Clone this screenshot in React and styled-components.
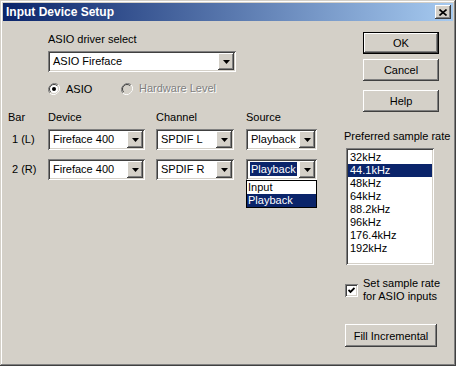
import styled, { createGlobalStyle } from 'styled-components'

const GlobalStyle = createGlobalStyle`
  html, body {
    margin: 0;
    padding: 0;
    background: #d4d0c8;
  }
  body {
    font-family: 'Liberation Sans', Arial, sans-serif;
    font-size: 11px;
    color: #000;
  }
  * {
    box-sizing: border-box;
  }
`

const raised = `
  box-shadow: inset -1px -1px #404040, inset 1px 1px #ffffff,
    inset -2px -2px #808080, inset 2px 2px #d4d0c8;
`
const sunken = `
  box-shadow: inset 1px 1px #808080, inset -1px -1px #ffffff,
    inset 2px 2px #404040, inset -2px -2px #d4d0c8;
`

const Window = styled.div`
  width: 456px;
  height: 366px;
  padding: 3px;
  background: #d4d0c8;
  box-shadow: inset -1px -1px #404040, inset 1px 1px #d4d0c8,
    inset -2px -2px #808080, inset 2px 2px #ffffff;
  display: flex;
  flex-direction: column;
`

const TitleBar = styled.div`
  height: 18px;
  display: flex;
  align-items: center;
  justify-content: space-between;
  padding: 0 2px 0 3px;
  background: linear-gradient(to right, #0a246a, #a6caf0);
`

const Title = styled.span`
  color: #fff;
  font-weight: bold;
  font-size: 12px;
`

const CloseButton = styled.div`
  width: 16px;
  height: 14px;
  background: #d4d0c8;
  ${raised}
  display: flex;
  align-items: center;
  justify-content: center;
  padding-right: 1px;
`

const Body = styled.div`
  flex: 1;
  display: flex;
`

const LeftPane = styled.div`
  width: 340px;
  display: flex;
  flex-direction: column;
`

const DriverBlock = styled.div`
  margin: 12px 0 0 45px;
  display: flex;
  flex-direction: column;
`

const Label = styled.div`
  line-height: 13px;
  white-space: nowrap;
  color: ${({ disabled }) => (disabled ? '#808080' : '#000')};
  text-shadow: ${({ disabled }) => (disabled ? '1px 1px #fff' : 'none')};
  padding-left: ${({ indent }) => indent || 0}px;
`

const ComboBox = styled.div`
  position: relative;
  width: ${({ width }) => width}px;
  height: 21px;
  margin-top: ${({ top }) => top || 0}px;
  background: #fff;
  ${sunken}
  padding: 2px;
  display: flex;
`

const ComboText = styled.div`
  flex: 1;
  line-height: 17px;
  padding-left: 3px;
  white-space: nowrap;
  overflow: hidden;
`

const Selected = styled.span`
  background: #0a246a;
  color: #fff;
  padding: 1px 1px;
  margin-left: -1px;
`

const ArrowButton = styled.div`
  width: 16px;
  height: 17px;
  background: #d4d0c8;
  ${raised}
  display: flex;
  align-items: center;
  justify-content: center;
`

const RadioRow = styled.div`
  margin-top: 10px;
  height: 13px;
  display: flex;
  align-items: center;
`

const RadioItem = styled.div`
  display: flex;
  align-items: center;
  gap: 6px;
  width: ${({ width }) => width || 'auto'};
`

const Grid = styled.div`
  margin-top: 16px;
  display: grid;
  grid-template-columns: 45px 108px 90px 72px;
  grid-template-rows: 18px 30px 21px;
  align-items: start;
`

const RowLabel = styled.div`
  line-height: 21px;
  padding-left: 9px;
`

const Cell = styled.div`
  position: relative;
`

const DropList = styled.div`
  position: absolute;
  top: 21px;
  left: 0;
  width: 71px;
  background: #fff;
  border: 1px solid #000;
  z-index: 2;
`

const DropItem = styled.div`
  line-height: 13px;
  padding-left: 1px;
  background: ${({ active }) => (active ? '#0a246a' : 'transparent')};
  color: ${({ active }) => (active ? '#fff' : '#000')};
`

const RightPane = styled.div`
  flex: 1;
  display: flex;
  flex-direction: column;
`

const ButtonStack = styled.div`
  margin: 11px 0 0 20px;
  display: flex;
  flex-direction: column;
`

const Button = styled.div`
  width: ${({ width }) => width || 76}px;
  height: ${({ height }) => height || 22}px;
  margin-top: ${({ top }) => top || 0}px;
  margin-left: ${({ left }) => left || 0}px;
  background: #d4d0c8;
  display: flex;
  align-items: center;
  justify-content: center;
  ${raised}
  ${({ isDefault }) =>
    isDefault &&
    `
    border: 1px solid #000;
    box-shadow: inset -1px -1px #404040, inset 1px 1px #ffffff,
      inset -2px -2px #808080, inset 2px 2px #d4d0c8;
  `}
`

const RateLabel = styled.div`
  margin: 18px 0 0 1px;
  line-height: 13px;
  white-space: nowrap;
`

const ListBox = styled.div`
  margin: 5px 0 0 3px;
  width: 88px;
  height: 117px;
  background: #fff;
  ${sunken}
  padding: 3px 2px 2px;
`

const ListItem = styled.div`
  line-height: 13px;
  padding-left: 2px;
  background: ${({ active }) => (active ? '#0a246a' : 'transparent')};
  color: ${({ active }) => (active ? '#fff' : '#000')};
`

const CheckRow = styled.div`
  margin: 12px 0 0 2px;
  display: flex;
  align-items: center;
  gap: 5px;
`

const CheckBox = styled.div`
  width: 13px;
  height: 13px;
  background: #fff;
  ${sunken}
  display: flex;
  align-items: center;
  justify-content: center;
`

const CheckText = styled.div`
  line-height: 13px;
`

function Arrow() {
  return (
    <svg width="7" height="4" viewBox="0 0 7 4">
      <polygon points="0,0 7,0 3.5,4" fill="#000" />
    </svg>
  )
}

function Combo({ width, value, top, selected, children }) {
  return (
    <ComboBox width={width} top={top}>
      <ComboText>{selected ? <Selected>{value}</Selected> : value}</ComboText>
      <ArrowButton>
        <Arrow />
      </ArrowButton>
      {children}
    </ComboBox>
  )
}

function Radio({ checked, disabled }) {
  return (
    <svg width="12" height="12" viewBox="0 0 12 12">
      <path d="M10.2 1.8 A6 6 0 0 0 1.8 10.2" fill="none" stroke="#808080" strokeWidth="1" />
      <path d="M1.8 10.2 A6 6 0 0 0 10.2 1.8" fill="none" stroke="#ffffff" strokeWidth="1" />
      <circle cx="6" cy="6" r="4.5" fill={disabled ? '#d4d0c8' : '#fff'} />
      <path d="M9.2 2.8 A4.5 4.5 0 0 0 2.8 9.2" fill="none" stroke="#404040" strokeWidth="1" />
      <path d="M2.8 9.2 A4.5 4.5 0 0 0 9.2 2.8" fill="none" stroke="#d4d0c8" strokeWidth="1" />
      {checked && <circle cx="6" cy="6" r="2" fill="#000" />}
    </svg>
  )
}

const rates = ['32kHz', '44.1kHz', '48kHz', '64kHz', '88.2kHz', '96kHz', '176.4kHz', '192kHz']

export default function App() {
  return (
    <>
      <GlobalStyle />
      <Window>
        <TitleBar>
          <Title>Input Device Setup</Title>
          <CloseButton>
            <svg width="8" height="7" viewBox="0 0 8 7">
              <path d="M0.5 0.5 L7.5 6.5 M7.5 0.5 L0.5 6.5" stroke="#000" strokeWidth="1.6" />
            </svg>
          </CloseButton>
        </TitleBar>
        <Body>
          <LeftPane>
            <DriverBlock>
              <Label>ASIO driver select</Label>
              <Combo width={188} top={5} value="ASIO Fireface" />
              <RadioRow>
                <RadioItem width="73px">
                  <Radio checked />
                  <span>ASIO</span>
                </RadioItem>
                <RadioItem>
                  <Radio disabled />
                  <Label disabled>Hardware Level</Label>
                </RadioItem>
              </RadioRow>
            </DriverBlock>
            <Grid>
              <Label indent={5}>Bar</Label>
              <Label>Device</Label>
              <Label>Channel</Label>
              <Label>Source</Label>

              <RowLabel>1 (L)</RowLabel>
              <Combo width={97} value="Fireface 400" />
              <Combo width={78} value="SPDIF L" />
              <Combo width={71} value="Playback" />

              <RowLabel>2 (R)</RowLabel>
              <Combo width={97} value="Fireface 400" />
              <Combo width={78} value="SPDIF R" />
              <Cell>
                <Combo width={71} value="Playback" selected />
                <DropList>
                  <DropItem>Input</DropItem>
                  <DropItem active>Playback</DropItem>
                </DropList>
              </Cell>
            </Grid>
          </LeftPane>
          <RightPane>
            <ButtonStack>
              <Button isDefault>OK</Button>
              <Button top={5}>Cancel</Button>
              <Button top={9}>Help</Button>
            </ButtonStack>
            <RateLabel>Preferred sample rate</RateLabel>
            <ListBox>
              {rates.map((rate) => (
                <ListItem key={rate} active={rate === '44.1kHz'}>
                  {rate}
                </ListItem>
              ))}
            </ListBox>
            <CheckRow>
              <CheckBox>
                <svg width="7" height="7" viewBox="0 0 7 7">
                  <polyline points="0.5,3 2.5,5 6.5,1" fill="none" stroke="#000" strokeWidth="1.8" />
                </svg>
              </CheckBox>
              <CheckText>
                Set sample rate
                <br />
                for ASIO inputs
              </CheckText>
            </CheckRow>
            <Button width={92} height={23} top={21} left={2}>
              Fill Incremental
            </Button>
          </RightPane>
        </Body>
      </Window>
    </>
  )
}
